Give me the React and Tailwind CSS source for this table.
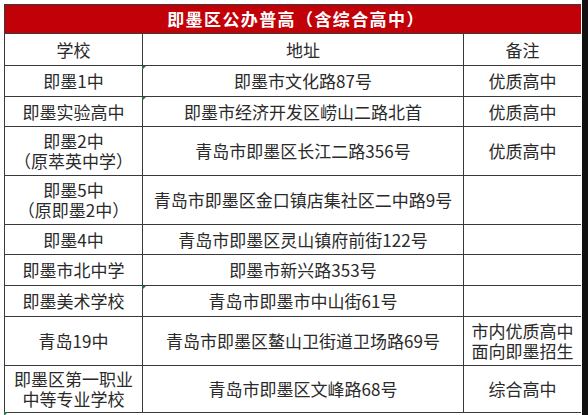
import React from "react";

const font = { fontFamily: '"Noto Sans CJK SC", "Noto Sans", sans-serif' };

const rows = [
  { h: "h-[30px]", a: ["即墨1中"], b: "即墨市文化路87号", c: ["优质高中"], mark: true },
  { h: "h-[29px]", a: ["即墨实验高中"], b: "即墨市经济开发区崂山二路北首", c: ["优质高中"], mark: true },
  { h: "h-[48px]", a: ["即墨2中", "（原萃英中学）"], b: "青岛市即墨区长江二路356号", c: ["优质高中"] },
  { h: "h-[48px]", a: ["即墨5中", "（原即墨2中）"], b: "青岛市即墨区金口镇店集社区二中路9号", c: [] },
  { h: "h-[29px]", a: ["即墨4中"], b: "青岛市即墨区灵山镇府前街122号", c: [] },
  { h: "h-[30px]", a: ["即墨市北中学"], b: "即墨市新兴路353号", c: [] },
  { h: "h-[30px]", a: ["即墨美术学校"], b: "青岛市即墨市中山街61号", c: [], mark: true },
  { h: "h-[48px]", a: ["青岛19中"], b: "青岛市即墨区鳌山卫街道卫场路69号", c: ["市内优质高中", "面向即墨招生"] },
  { h: "h-[46px]", a: ["即墨区第一职业", "中等专业学校"], b: "青岛市即墨区文峰路68号", c: ["综合高中"] },
];

function Mark() {
  return (
    <span className="absolute -left-[1px] top-0 w-0 h-0 border-t-[4px] border-t-[#1f7a3a] border-r-[4px] border-r-transparent" />
  );
}

function Cell({ lines, h, mark }) {
  return (
    <div className={`relative bg-white ${h} flex flex-col items-center justify-center text-[17px] leading-[20px] text-[#2a2a2a] whitespace-nowrap`}>
      {mark && <Mark />}
      {lines.map((l, i) => (
        <span key={i} className="block leading-[20px]">{l}</span>
      ))}
    </div>
  );
}

export default function App() {
  return (
    <div className="w-[588px] h-[415px] bg-white flex overflow-hidden" style={font}>
      <div className="flex-1 pt-[4px] pl-[4px] pr-[1px]">
        <div className="relative grid grid-cols-[137px_320px_117px] gap-px bg-[#3a3a3a] p-px w-[577px]">
          <div className="col-span-3 h-[28px] bg-[#c20008] flex items-center justify-center text-white font-bold text-[17px] tracking-[1.4px] pl-[6px]">
            即墨区公办普高（含综合高中）
          </div>
          <Cell lines={["学校"]} h="h-[31px]" />
          <Cell lines={["地址"]} h="h-[31px]" />
          <Cell lines={["备注"]} h="h-[31px]" />
          {rows.map((r, i) => (
            <React.Fragment key={i}>
              <Cell lines={r.a} h={r.h} />
              <Cell lines={[r.b]} h={r.h} mark={r.mark} />
              <Cell lines={r.c} h={r.h} />
            </React.Fragment>
          ))}
          <span className="absolute left-0 -bottom-[3px] w-0 h-0 border-t-[4px] border-t-[#1f7a3a] border-r-[4px] border-r-transparent" />
        </div>
      </div>
      <div className="w-[6px] bg-[#111]" />
    </div>
  );
}
